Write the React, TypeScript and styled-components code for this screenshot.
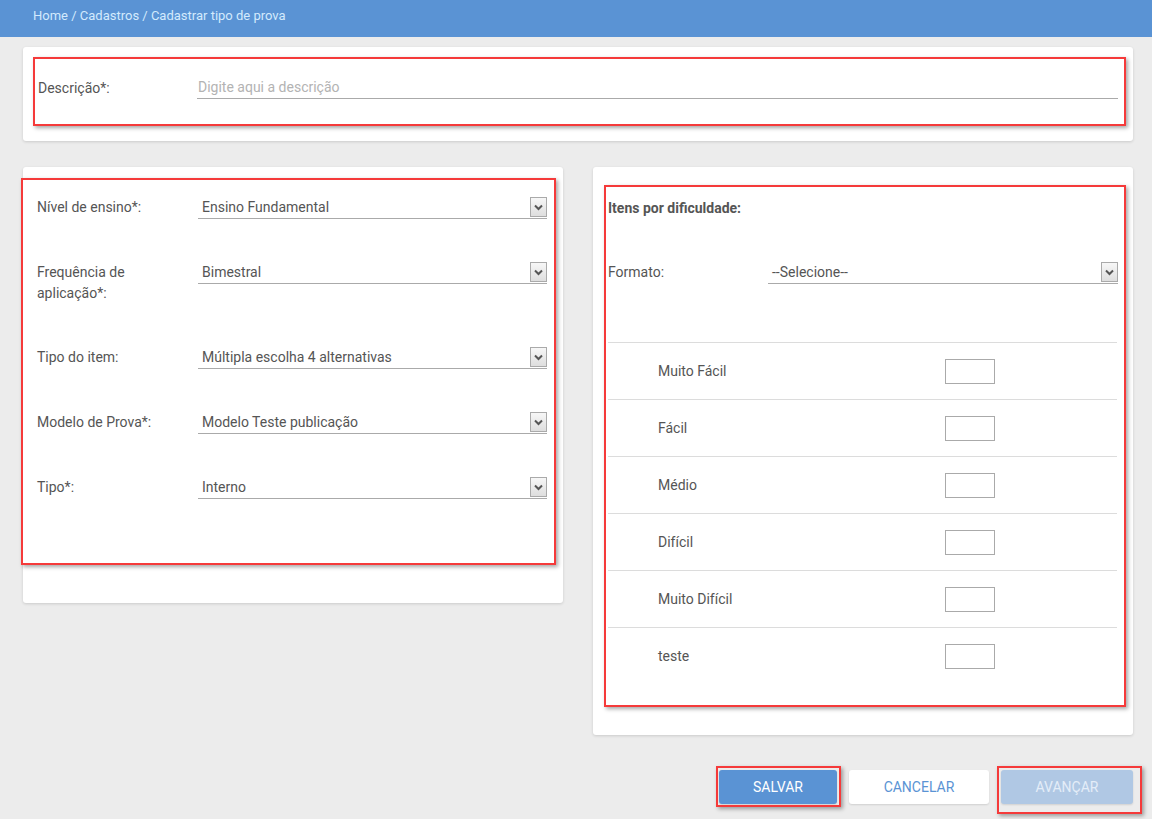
import { createGlobalStyle, styled } from 'styled-components'

const GlobalStyle = createGlobalStyle`
  html, body {
    margin: 0;
    padding: 0;
    background: #ececec;
    font-family: Roboto, 'Liberation Sans', Arial, sans-serif;
    color: #555;
    font-size: 14px;
  }
  * { box-sizing: border-box; }
`

const Page = styled.div`
  width: 1152px;
  min-height: 819px;
  background: #ececec;
`

const Header = styled.header`
  height: 37px;
  background: #5a93d4;
  padding: 8px 0 0 33px;
  font-size: 13px;
  color: #d3eafd;
  line-height: 16px;
`

const Main = styled.main`
  padding: 10px 19px 0 23px;
`

const Card = styled.section`
  display: flow-root;
  background: #fff;
  border-radius: 3px;
  box-shadow: 0 1px 3px rgba(0, 0, 0, 0.14);
`

const Columns = styled.div`
  display: flex;
  align-items: flex-start;
  gap: 30px;
  margin-top: 26px;
`

const Column = styled(Card)`
  flex: 1;
`

// red annotation frame drawn round a part of the form
const Highlight = styled.div<{ $m: string; $p: string }>`
  margin: ${(p) => p.$m};
  padding: ${(p) => p.$p};
  border: 2px solid #f53a3a;
  box-shadow: 2px 2px 4px rgba(0, 0, 0, 0.35);
`

const Field = styled.div<{ $label?: number }>`
  display: grid;
  grid-template-columns: ${(p) => p.$label ?? 161}px 1fr;
  align-items: start;
  & + & {
    margin-top: 43px;
  }
`

const Label = styled.label<{ $wrap?: boolean }>`
  line-height: 21px;
  color: #555;
  max-width: ${(p) => (p.$wrap ? '120px' : 'none')};
`

const TextInput = styled.input`
  border: none;
  border-bottom: 1px solid #aaa;
  outline: none;
  height: 21px;
  padding: 0 0 2px 1px;
  font: inherit;
  color: #555;
  width: 100%;
  background: transparent;
  &::placeholder {
    color: #b3b3b3;
  }
`

const SelectBox = styled.div`
  display: flex;
  align-items: flex-start;
  height: 22px;
  border-bottom: 1px solid #aaa;
`

const SelectText = styled.span`
  flex: 1;
  padding-left: 4px;
  line-height: 20px;
  color: #555;
`

const Arrow = styled.span`
  width: 17px;
  height: 20px;
  border: 1px solid #aaa;
  background: linear-gradient(#f7f7f7, #dedede);
  display: flex;
  align-items: center;
  justify-content: center;
`

const Title = styled.div`
  font-weight: 700;
  line-height: 21px;
  color: #555;
  margin-bottom: 43px;
`

const Table = styled.div`
  margin-top: 58px;
  margin-right: 1px;
`

const Row = styled.div`
  height: 57px;
  border-top: 1px solid #dcdcdc;
  display: flex;
  align-items: center;
  padding-left: 50px;
`

const RowLabel = styled.span`
  width: 287px;
  color: #555;
`

const SmallBox = styled.input`
  width: 50px;
  height: 25px;
  border: 1px solid #aaa;
  outline: none;
  font: inherit;
`

const Actions = styled.div`
  display: flex;
  justify-content: flex-end;
  gap: 12px;
  margin-top: 35px;
`

const Button = styled.button<{ $variant: 'primary' | 'plain' | 'disabled'; $w: number }>`
  position: relative;
  width: ${(p) => p.$w}px;
  height: 34px;
  border: none;
  border-radius: 3px;
  font-family: Roboto, 'Liberation Sans', Arial, sans-serif;
  font-size: 14px;
  text-transform: uppercase;
  box-shadow: 0 1px 2px rgba(0, 0, 0, 0.12);
  background: ${(p) =>
    p.$variant === 'primary' ? '#5a93d4' : p.$variant === 'plain' ? '#fff' : '#b0c8e4'};
  color: ${(p) =>
    p.$variant === 'primary' ? '#fff' : p.$variant === 'plain' ? '#5a93d4' : '#e4edf8'};
`

const ButtonFrame = styled.span<{ $inset: string }>`
  position: absolute;
  inset: ${(p) => p.$inset};
  border: 2px solid #f53a3a;
  box-shadow: 2px 2px 4px rgba(0, 0, 0, 0.35);
  pointer-events: none;
`

const Chevron = () => (
  <svg width="9" height="7" viewBox="0 0 9 7">
    <path d="M1 1.5 L4.5 5 L8 1.5" fill="none" stroke="#555" strokeWidth="2" />
  </svg>
)

const Select = ({ value }: { value: string }) => (
  <SelectBox>
    <SelectText>{value}</SelectText>
    <Arrow>
      <Chevron />
    </Arrow>
  </SelectBox>
)

const leftFields: [string, string][] = [
  ['Nível de ensino*:', 'Ensino Fundamental'],
  ['Frequência de aplicação*:', 'Bimestral'],
  ['Tipo do item:', 'Múltipla escolha 4 alternativas'],
  ['Modelo de Prova*:', 'Modelo Teste publicação'],
  ['Tipo*:', 'Interno'],
]

const levels = ['Muito Fácil', 'Fácil', 'Médio', 'Difícil', 'Muito Difícil', 'teste']

export default function App() {
  return (
    <Page>
      <GlobalStyle />
      <Header>Home / Cadastros / Cadastrar tipo de prova</Header>
      <Main>
        <Card>
          <Highlight $m="10px 7px 15px 10px" $p="19px 6px 25px 3px">
            <Field $label={159}>
              <Label>Descrição*:</Label>
              <TextInput placeholder="Digite aqui a descrição" />
            </Field>
          </Highlight>
        </Card>

        <Columns>
          <Column>
            <Highlight $m="11px 7px 38px -2px" $p="17px 7px 64px 14px">
              {leftFields.map(([label, value]) => (
                <Field key={label}>
                  <Label $wrap={label.length > 20}>{label}</Label>
                  <Select value={value} />
                </Field>
              ))}
            </Highlight>
          </Column>

          <Column>
            <Highlight $m="18px 7px 28px 11px" $p="11px 6px 21px 2px">
              <Title>Itens por dificuldade:</Title>
              <Field $label={160}>
                <Label>Formato:</Label>
                <Select value="--Selecione--" />
              </Field>
              <Table>
                {levels.map((l) => (
                  <Row key={l}>
                    <RowLabel>{l}</RowLabel>
                    <SmallBox />
                  </Row>
                ))}
              </Table>
            </Highlight>
          </Column>
        </Columns>

        <Actions>
          <Button $variant="primary" $w={118}>
            Salvar
            <ButtonFrame $inset="-4px -4px -3px -3px" />
          </Button>
          <Button $variant="plain" $w={140}>
            Cancelar
          </Button>
          <Button $variant="disabled" $w={132}>
            Avançar
            <ButtonFrame $inset="-4px -9px -10px -4px" />
          </Button>
        </Actions>
      </Main>
    </Page>
  )
}
